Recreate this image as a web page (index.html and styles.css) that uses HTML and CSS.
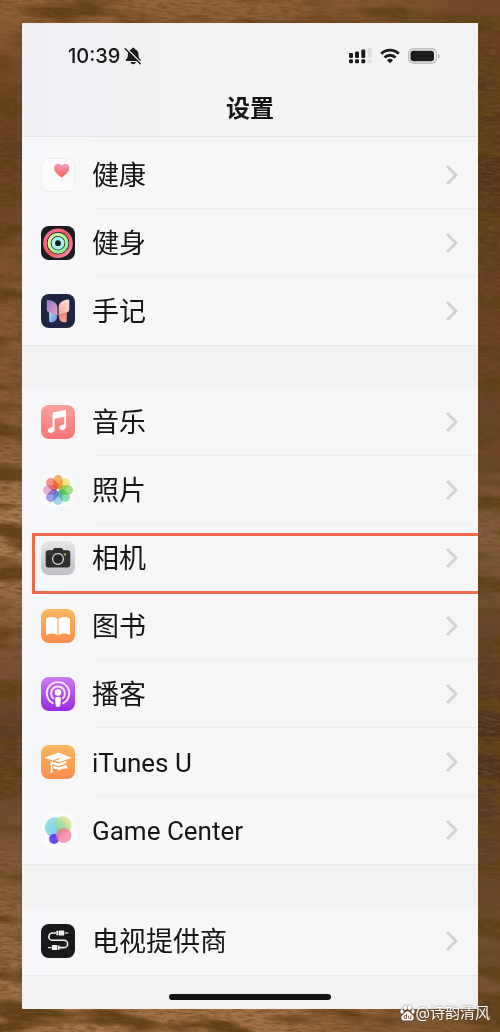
FILE: index.html
```html
<!DOCTYPE html>
<html lang="zh-CN">
<head>
  <meta charset="UTF-8" />
  <meta name="viewport" content="width=device-width, initial-scale=1.0" />
  <title>设置</title>
  <link rel="stylesheet" href="styles.css">
</head>
<body>
  <!-- wood table -->
  <svg class="wood" aria-hidden="true">
    <filter id="grain" x="0" y="0" width="100%" height="100%">
      <feTurbulence type="fractalNoise" baseFrequency="0.012 0.05" numOctaves="4" seed="23" />
      <feColorMatrix values="0 0 0 0 0.12  0 0 0 0 0.05  0 0 0 0 0.01  4.2 0 0 0 -1.9" />
    </filter>
    <filter id="fiber" x="0" y="0" width="100%" height="100%">
      <feTurbulence type="fractalNoise" baseFrequency="0.09 0.5" numOctaves="3" seed="4" />
      <feColorMatrix values="0 0 0 0 0.16  0 0 0 0 0.07  0 0 0 0 0.02  2.2 0 0 0 -0.9" />
    </filter>
    <g transform="rotate(4 250 516)">
      <rect x="-10%" y="-5%" width="120%" height="110%" filter="url(#grain)" />
      <rect x="-10%" y="-5%" width="120%" height="110%" filter="url(#fiber)" />
    </g>
  </svg>

  <div class="phone">
    <header class="top">
      <div class="status">
        <span class="time">10:39</span>
        <svg class="bell" width="18" height="18" viewBox="0 0 18 18">
          <path d="M9.200.8c.9 0 1.600.6 1.700 1.400 2.500.8 3.600 2.800 3.600 5.200 0 3 .8 4 2 5.100.5.500.3 1.500-.5 1.500H2.400c-.8 0-1-1-.5-1.500 1.200-1.100 2-2.100 2-5.100 0-2.400 1.100-4.400 3.600-5.200.1-.8.800-1.400 1.700-1.400zM6.500 15h5.400c-.3 1.400-1.300 2.200-2.700 2.200S6.800 16.400 6.500 15z" fill="#1b1b1d" />
          <path d="M2.300 1.300l15 15" stroke="#f2f3f4" stroke-width="1.600" />
          <path d="M1.200 1.700l15 15" stroke="#1b1b1d" stroke-width="1.400" stroke-linecap="round" />
        </svg>
        <span class="space"></span>
        <svg width="23" height="16" viewBox="0 0 23 16">
          <g fill="#1b1b1d">
            <rect x="0" y="5" width="4" height="5" rx="1.200" />
            <rect x="6" y="3.500" width="4" height="6.500" rx="1.200" />
            <rect x="12.300" y="1.500" width="4" height="8.500" rx="1.200" />
            <rect x="0" y="11.300" width="4" height="4" rx="1.300" />
            <rect x="6" y="11.300" width="4" height="4" rx="1.300" />
            <rect x="12.300" y="11.300" width="4" height="4" rx="1.300" />
          </g>
          <g fill="#dededf">
            <rect x="18.500" y="0" width="4" height="10" rx="1.200" />
            <rect x="18.500" y="11.300" width="4" height="4" rx="1.300" />
          </g>
        </svg>
        <svg class="wifi" width="20" height="16" viewBox="0 0 20 16">
          <g fill="none" stroke="#1b1b1d" stroke-width="2.800">
            <path d="M1.200 5.800a12.600 12.600 0 0 1 17.600 0" />
            <path d="M4.500 9.500a7.900 7.900 0 0 1 11 0" />
          </g>
          <path d="M7 12.200a4.300 4.300 0 0 1 6 0l-3 3z" fill="#1b1b1d" />
        </svg>
        <svg width="32" height="16" viewBox="0 0 32 16">
          <rect x=".7" y=".9" width="27.600" height="14.200" rx="4.500" fill="none" stroke="#b4b4b6" stroke-width="1.200" />
          <rect x="2.500" y="2.800" width="23.500" height="10.400" rx="3" fill="#1b1b1d" />
          <path d="M30 6v4.500c1-.3 1.700-1.200 1.700-2.200S31 6.300 30 6z" fill="#b4b4b6" />
        </svg>
      </div>
      <h1>设置</h1>
    </header>

    <main>
      <ul class="group first">
        <li><a href="#health">
          <svg class="icon" viewBox="0 0 34 34">
            <defs><linearGradient id="heart" x2="0" y2="1"><stop stop-color="#f79bc0" /><stop offset="1" stop-color="#f4664f" /></linearGradient></defs>
            <rect x=".5" y=".5" width="33" height="33" rx="7.500" fill="#fbfbfb" stroke="#ececec" />
            <path d="M20.700 19.500C16 16 13 13.200 13 9.900 13 7.500 14.800 5.800 17 5.800c1.600 0 2.900.8 3.700 2 .8-1.200 2.100-2 3.700-2 2.200 0 4 1.700 4 4.100 0 3.300-3 6.100-7.700 9.600z" fill="url(#heart)" />
          </svg>
          <span>健康</span>
          <svg class="chevron" viewBox="0 0 14 22"><path d="M2 2l9 9-9 9" /></svg>
        </a></li>
        <li><a href="#fitness">
          <svg class="icon" viewBox="0 0 34 34">
            <defs>
              <linearGradient id="move" x2="1" y2="1"><stop stop-color="#f873a5" /><stop offset=".5" stop-color="#f2585c" /><stop offset="1" stop-color="#f58cae" /></linearGradient>
              <linearGradient id="exercise" x2="1" y2="1"><stop stop-color="#dcf9a0" /><stop offset="1" stop-color="#8eeb91" /></linearGradient>
            </defs>
            <rect width="34" height="34" rx="8" fill="#1c1b1d" />
            <g fill="none" stroke-width="3.600">
              <circle cx="17" cy="17.200" r="13" stroke="url(#move)" />
              <circle cx="17" cy="17.200" r="8.900" stroke="url(#exercise)" stroke-width="3.300" />
              <circle cx="17" cy="17.200" r="4.700" stroke="#a5f3ec" stroke-width="3.600" />
            </g>
          </svg>
          <span>健身</span>
          <svg class="chevron" viewBox="0 0 14 22"><path d="M2 2l9 9-9 9" /></svg>
        </a></li>
        <li><a href="#journal">
          <svg class="icon" viewBox="0 0 34 34">
            <defs>
              <linearGradient id="wing1" x2="1" y2="1"><stop stop-color="#8b79cf" /><stop offset="1" stop-color="#eba3bb" /></linearGradient>
              <linearGradient id="wing2" x1="1" x2="0" y2="1"><stop stop-color="#fbe3dc" /><stop offset="1" stop-color="#f2a49b" /></linearGradient>
              <linearGradient id="wing3" x2="1" y2="1"><stop stop-color="#b9d5fa" /><stop offset="1" stop-color="#6488e2" /></linearGradient>
              <linearGradient id="wing4" x2="0" y2="1"><stop stop-color="#f0786b" /><stop offset="1" stop-color="#f9aa9a" /></linearGradient>
            </defs>
            <rect width="34" height="34" rx="8" fill="#1f2440" />
            <path d="M8 18c4 0 8 2 8 5.500 0 2.700-3.200 5-6.500 4.800-.9 0-1.300-.5-1.300-1.300z" fill="url(#wing3)" />
            <path d="M26 18c-4 0-8 2-8 5.500 0 2.700 3 5 6.300 4.800.9 0 1.300-.5 1.300-1.300z" fill="url(#wing4)" />
            <path d="M5.700 7.200c0-.8.6-1.200 1.400-1.100 5.400.5 9.300 3.500 9.300 7.700v8.700c-1.200-2-4-3.300-7.400-3.900-2.300-.4-3.300-1.500-3.300-3.700z" fill="url(#wing1)" />
            <path d="M28.300 6.700c0-.8-.6-1.200-1.400-1.100-5.400.5-9.300 3.500-9.300 7.700v9.200c1.200-2 4-3.300 7.400-3.900 2.300-.4 3.300-1.500 3.300-3.700z" fill="url(#wing2)" />
          </svg>
          <span>手记</span>
          <svg class="chevron" viewBox="0 0 14 22"><path d="M2 2l9 9-9 9" /></svg>
        </a></li>
      </ul>

      <ul class="group">
        <li><a href="#music">
          <svg class="icon" viewBox="0 0 34 34">
            <defs><linearGradient id="music" x2="0" y2="1"><stop stop-color="#fda19f" /><stop offset="1" stop-color="#f87573" /></linearGradient></defs>
            <rect width="34" height="34" rx="8" fill="url(#music)" />
            <path d="M11.500 8.600c0-.8.4-1.200 1.200-1.400l11-2.200c.8-.2 1.300.2 1.300 1v15.300c0 2.300-1.500 3.600-3.600 3.800-1.800.2-3.100-.8-3.100-2.400 0-1.500 1-2.400 2.700-2.800l1.300-.3c.7-.1.900-.5.900-1.100v-6.700l-9.700 2v10.500c0 2.300-1.500 3.500-3.600 3.700-1.800.1-3-.9-3-2.400s1-2.400 2.700-2.800l1.100-.3c.6-.1.800-.5.800-1z" fill="#fff" />
          </svg>
          <span>音乐</span>
          <svg class="chevron" viewBox="0 0 14 22"><path d="M2 2l9 9-9 9" /></svg>
        </a></li>
        <li><a href="#photos">
          <svg class="icon" viewBox="0 0 34 34">
            <rect width="34" height="34" rx="8" fill="#fafafa" />
            <g class="petals">
              <rect x="12.300" y="2" width="9.400" height="14" rx="4.700" fill="#fbb668" />
              <rect x="12.300" y="2" width="9.400" height="14" rx="4.700" fill="#f6ea8c" transform="rotate(45 17 17)" />
              <rect x="12.300" y="2" width="9.400" height="14" rx="4.700" fill="#a5e487" transform="rotate(90 17 17)" />
              <rect x="12.300" y="2" width="9.400" height="14" rx="4.700" fill="#8ce3b6" transform="rotate(135 17 17)" />
              <rect x="12.300" y="2" width="9.400" height="14" rx="4.700" fill="#a2d8f6" transform="rotate(180 17 17)" />
              <rect x="12.300" y="2" width="9.400" height="14" rx="4.700" fill="#a3a3ef" transform="rotate(225 17 17)" />
              <rect x="12.300" y="2" width="9.400" height="14" rx="4.700" fill="#ecb5dc" transform="rotate(270 17 17)" />
              <rect x="12.300" y="2" width="9.400" height="14" rx="4.700" fill="#fa9388" transform="rotate(315 17 17)" />
            </g>
          </svg>
          <span>照片</span>
          <svg class="chevron" viewBox="0 0 14 22"><path d="M2 2l9 9-9 9" /></svg>
        </a></li>
        <li class="marked"><a href="#camera">
          <svg class="icon" viewBox="0 0 34 34">
            <defs><linearGradient id="camera" x2="0" y2="1"><stop stop-color="#e6e6e8" /><stop offset="1" stop-color="#bfc0c3" /></linearGradient></defs>
            <rect width="34" height="34" rx="8" fill="url(#camera)" />
            <path d="M4.700 12c0-1.700 1-2.700 2.700-2.700h3.200c.8 0 1.100-.3 1.500-.9.600-.9 1.200-1.300 2.300-1.300h5.200c1.100 0 1.700.4 2.300 1.300.4.6.7.9 1.500.9h3.200c1.700 0 2.700 1 2.700 2.700v11.800c0 1.700-1 2.700-2.700 2.700H7.400c-1.700 0-2.700-1-2.700-2.700z" fill="#2e2f31" />
            <path d="M5 12.600h24" stroke="#515254" stroke-width=".6" />
            <circle cx="17" cy="18" r="5.400" fill="#252628" stroke="#e3e3e4" stroke-width="1.200" />
            <circle cx="24" cy="13.500" r="1" fill="#f4c95a" />
          </svg>
          <span>相机</span>
          <svg class="chevron" viewBox="0 0 14 22"><path d="M2 2l9 9-9 9" /></svg>
        </a></li>
        <li><a href="#books">
          <svg class="icon" viewBox="0 0 34 34">
            <defs><linearGradient id="orange" x2="0" y2="1"><stop stop-color="#fbb860" /><stop offset="1" stop-color="#fc8c4a" /></linearGradient></defs>
            <rect width="34" height="34" rx="8" fill="url(#orange)" />
            <path d="M16.500 10v16.300c-1.500-1.200-3.300-1.700-5.600-1.700-1.900 0-3.500.4-4.900 1.200-.6.300-1 0-1-.6V10.300c0-.5.200-.8.600-1.100C7 8.400 8.700 8 10.700 8c2.500 0 4.500.7 5.800 2zM17.500 10v16.300c1.500-1.200 3.300-1.700 5.600-1.700 1.900 0 3.500.4 4.900 1.200.6.300 1 0 1-.6V10.300c0-.5-.2-.8-.6-1.100C27 8.400 25.300 8 23.300 8c-2.500 0-4.500.7-5.800 2z" fill="#fff" />
          </svg>
          <span>图书</span>
          <svg class="chevron" viewBox="0 0 14 22"><path d="M2 2l9 9-9 9" /></svg>
        </a></li>
        <li><a href="#podcasts">
          <svg class="icon" viewBox="0 0 34 34">
            <defs><linearGradient id="purple" x2="0" y2="1"><stop stop-color="#cd79f5" /><stop offset="1" stop-color="#952be3" /></linearGradient></defs>
            <rect width="34" height="34" rx="8" fill="url(#purple)" />
            <g fill="none" stroke="#f7eafd" stroke-width="1.900" stroke-linecap="round">
              <path d="M11.800 26.200a11.200 11.200 0 1 1 10.400 0" />
              <path d="M12.300 21.400a6.900 6.900 0 1 1 9.400 0" />
            </g>
            <circle cx="17" cy="15.500" r="3.200" fill="#fff" />
            <path d="M17 19.800c2 0 3 .8 2.900 2.500l-.5 5.600c-.1 1.300-.9 2-2.400 2s-2.300-.7-2.400-2l-.5-5.600c-.1-1.700.9-2.500 2.900-2.500z" fill="#fff" />
          </svg>
          <span>播客</span>
          <svg class="chevron" viewBox="0 0 14 22"><path d="M2 2l9 9-9 9" /></svg>
        </a></li>
        <li><a href="#itunes-u">
          <svg class="icon" viewBox="0 0 34 34">
            <rect width="34" height="34" rx="8" fill="url(#orange)" />
            <g fill="#fff">
              <path d="M3 12.700L17.700 7.500l12.800 5.200L18 17.200l-4-1.200 4.500-2-.4-.9-6.500 2.300z" />
              <path d="M9.300 16l8 2.600 8.200-2.700v2L19 20.700c-1 .4-1.600.4-2.600 0l-5-1.900v4.500l.6 4.500H9.300l.6-4.500z" />
              <path d="M12.300 20.500l4.100 1.500c1 .3 1.600.3 2.600 0l6-2.300 2.200 4.100c-3.200-.6-6.400-.1-9.200 1.600-1.700-1.200-3.500-1.800-5.700-1.900z" />
            </g>
          </svg>
          <span class="latin">iTunes U</span>
          <svg class="chevron" viewBox="0 0 14 22"><path d="M2 2l9 9-9 9" /></svg>
        </a></li>
        <li><a href="#game-center">
          <svg class="icon" viewBox="0 0 34 34">
            <defs>
              <linearGradient id="ball1" x2="1" y2="1"><stop stop-color="#8be5dc" /><stop offset="1" stop-color="#74bdf8" /></linearGradient>
              <linearGradient id="ball2" x1="1" x2="0" y2="1"><stop stop-color="#fbe88c" /><stop offset="1" stop-color="#65d69a" /></linearGradient>
              <linearGradient id="ball3" x2="1" y2="1"><stop stop-color="#f1766f" /><stop offset="1" stop-color="#fb93cb" /></linearGradient>
            </defs>
            <rect width="34" height="34" rx="8" fill="#fafafa" />
            <circle cx="14" cy="14.500" r="10.200" fill="url(#ball1)" opacity=".9" />
            <circle cx="22" cy="12" r="8.400" fill="url(#ball2)" opacity=".85" />
            <circle cx="13" cy="26" r="4.900" fill="#5a35f2" opacity=".9" />
            <circle cx="22.800" cy="22.500" r="7.600" fill="url(#ball3)" opacity=".85" />
          </svg>
          <span class="latin">Game Center</span>
          <svg class="chevron" viewBox="0 0 14 22"><path d="M2 2l9 9-9 9" /></svg>
        </a></li>
      </ul>

      <ul class="group">
        <li><a href="#tv-provider">
          <svg class="icon" viewBox="0 0 34 34">
            <rect width="34" height="34" rx="8" fill="#19191b" />
            <path d="M15 9h-3.500a3.600 3.600 0 0 0 0 7.300h11.500a3.600 3.600 0 0 1 0 7.300h-4" fill="none" stroke="#f4f4f4" stroke-width="1.600" />
            <g fill="#f4f4f4">
              <rect x="15.300" y="6.800" width="2" height="4.400" rx=".5" />
              <rect x="17.800" y="6.500" width="5.400" height="5" rx=".6" />
              <rect x="23.800" y="8.400" width="3.400" height="1.200" />
              <rect x="16.800" y="21.400" width="2" height="4.400" rx=".5" />
              <rect x="10.900" y="21.100" width="5.400" height="5" rx=".6" />
              <rect x="7" y="23" width="3.400" height="1.200" />
            </g>
          </svg>
          <span>电视提供商</span>
          <svg class="chevron" viewBox="0 0 14 22"><path d="M2 2l9 9-9 9" /></svg>
        </a></li>
      </ul>
    </main>

    <div class="bottom"><div class="home-bar"></div></div>
  </div>

  <div class="credit">
    <svg width="15" height="16" viewBox="0 0 15 16">
      <g fill="#fff">
        <ellipse cx="2" cy="6.500" rx="1.700" ry="2.200" />
        <ellipse cx="5.300" cy="2.800" rx="1.700" ry="2.300" />
        <ellipse cx="9.600" cy="2.800" rx="1.700" ry="2.300" />
        <ellipse cx="13" cy="6.500" rx="1.700" ry="2.200" />
        <path d="M7.500 6.300c1.800 0 2.600 1.500 3.800 2.700 1.300 1.200 2.500 2 2.500 3.700 0 1.800-1.300 2.900-3 2.900H4.200c-1.700 0-3-1.100-3-2.900 0-1.700 1.200-2.500 2.500-3.700 1.200-1.200 2-2.700 3.800-2.700z" />
      </g>
      <path d="M6.500 9v4.500H5.300a1.300 1.300 0 0 1 0-2.800h1.200M8.500 10.600v1.900c0 .7.400 1 1 1h1.300v-2.900" fill="none" stroke="#7b563b" stroke-width="1" />
    </svg>
    <span>@诗韵清风</span>
  </div>
</body>
</html>
```
FILE: styles.css
```css
*,
*::before,
*::after {
  box-sizing: border-box;
}
body {
  margin: 0;
  padding: 23px 22px;
  position: relative;
  font-family: Inter, "Noto Sans CJK SC", sans-serif;
  color: #161618;
  background:
    linear-gradient(90deg, transparent 50%, rgba(50, 22, 5, 0.35) 95%),
    linear-gradient(#96683f 0%, #7c4f2d 5%, #603b1d 15%, #845735 28%, #885c3a 42%, #b0855a 52%, #84593a 62%, #583824 72%, #825b3a 84%, #986f49 94%, #a4754a 100%);
}
.wood {
  position: absolute;
  top: 0;
  left: 0;
  width: 100%;
  height: 100%;
  z-index: -1;
}
.phone {
  background-color: #f0f2f4;
}

/* Header */
.top {
  background: linear-gradient(90deg, #eeeff3, #f3f3f3 45%);
  border-bottom: 1px solid #e6e6e8;
  padding: 23px 38px 9px 46px;
}
.status {
  display: flex;
  align-items: center;
  height: 20px;
}
.time {
  font-size: 20px;
  line-height: 20px;
  font-weight: 500;
}
.bell {
  margin-left: 4px;
}
.space {
  flex: 1;
}
.wifi {
  margin: 0 8px;
}
h1 {
  margin: 25px 0 0;
  padding-right: 8px;
  font-size: 24px;
  line-height: 36px;
  font-weight: 700;
  text-align: center;
}

/* List */
.group {
  list-style: none;
  margin: 0 0 42px;
  padding: 0;
  background: linear-gradient(90deg, #f6f7fa, #f7f7f7 20%);
  border-bottom: 1px solid #e9eaec;
}
.group.first {
  padding-top: 4px;
}
.group:last-child {
  margin-bottom: 0;
}
.group li {
  position: relative;
}
.group a {
  display: flex;
  align-items: center;
  height: 68px;
  padding: 0 19px;
  color: inherit;
  text-decoration: none;
}
.icon {
  width: 34px;
  height: 34px;
  margin-right: 17px;
  flex: none;
}
.group span {
  flex: 1;
  padding-top: 2px;
  font-size: 27px;
  line-height: 40px;
}
.group .latin {
  font-family: Roboto, sans-serif;
  font-size: 26px;
}
.chevron {
  width: 14px;
  height: 22px;
  fill: none;
  stroke: #d3d3d5;
  stroke-width: 3;
}
.group li + li::before,
.first li:first-child::before {
  content: "";
  position: absolute;
  top: -1px;
  left: 70px;
  right: 0;
  border-top: 1px solid #eeeeef;
}
.petals rect {
  mix-blend-mode: multiply;
}

/* red frame round the camera row */
.marked::after {
  content: "";
  position: absolute;
  top: 9px;
  left: 10px;
  right: 0;
  height: 61px;
  border: 3px solid #ed6a4b;
  border-right: none;
  pointer-events: none;
  z-index: 1;
}

.bottom {
  padding: 18px 0 9px;
}
.home-bar {
  width: 162px;
  height: 6px;
  margin: 0 auto;
  border-radius: 3px;
  background-color: #131315;
}

.credit {
  position: absolute;
  right: 10px;
  bottom: 7px;
  display: flex;
  align-items: center;
  gap: 1px;
  color: #fff;
  font-size: 15px;
  line-height: 24px;
  text-shadow: 0 0 2px rgba(60, 40, 30, 0.7);
}
.credit svg {
  filter: drop-shadow(0 0 1px rgba(60, 40, 30, 0.7));
}
```
